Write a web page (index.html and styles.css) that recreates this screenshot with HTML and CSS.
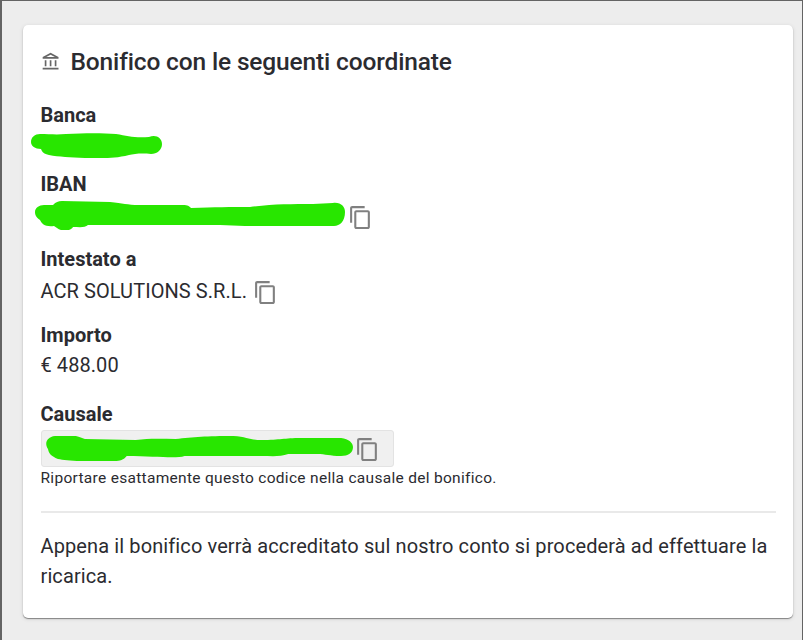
FILE: index.html
```html
<!DOCTYPE html>
<html lang="it">
<head>
  <meta charset="UTF-8">
  <title>Bonifico</title>
  <link rel="stylesheet" href="styles.css">
</head>
<body>
  <svg class="hidden">
    <symbol id="copy" viewBox="0 0 24 24">
      <path d="M16 1H4c-1.1 0-2 .9-2 2v14h2V3h12V1zm3 4H8c-1.1 0-2 .9-2 2v14c0 1.1.9 2 2 2h11c1.1 0 2-.9 2-2V7c0-1.1-.9-2-2-2zm0 16H8V7h11v14z"/>
    </symbol>
  </svg>

  <main class="card">
    <h1>
      <svg class="bank-icon" viewBox="0 0 24 24"><path d="M6.5 10h-2v7h2v-7zm6 0h-2v7h2v-7zm8.5 9H2v2h19v-2zm-2.5-9h-2v7h2v-7zm-7-6.74L16.71 6H6.29l5.21-2.74m0-2.26L2 6v2h19V6l-9.5-5z"/></svg>
      Bonifico con le seguenti coordinate
    </h1>

    <section class="field">
      <h2>Banca</h2>
      <div class="value">
        <svg class="mask mask-bank" viewBox="0 0 131 26"><path d="M9 1C18 1 25 2 35 1C54 0 72 0 85 1C97 3 103 5 118 4C125 1 131 5 131 11C131 17 126 21 120 21C110 20 103 21 98 22C82 26 72 25 54 25C39 24 28 24 18 22C13 21 11 19 10 16C4 16 0 13 0 9C0 4 4 1 9 1Z"/></svg>
      </div>
    </section>

    <section class="field">
      <h2>IBAN</h2>
      <div class="value iban">
        <svg class="mask mask-iban" viewBox="0 0 310 30"><path d="M9 5L18 5C21 2 23 1 27 1L75 2C88 3 92 5 104 5L148 5C153 5 154 6 156 8C180 7 195 7 215 7C238 4 256 4 278 4L298 3C306 2 310 7 310 12C310 21 305 26 299 26L210 26L185 25L53 25C50 28 44 27 38 27C36 31 27 32 22 28L19 26C10 27 7 24 5 20C1 17 0 15 0 12C0 8 4 5 9 5Z"/></svg>
        <svg class="copy-icon"><use href="#copy"/></svg>
      </div>
    </section>

    <section class="field">
      <h2>Intestato a</h2>
      <div class="value holder">
        <span>ACR SOLUTIONS S.R.L.</span>
        <svg class="copy-icon"><use href="#copy"/></svg>
      </div>
    </section>

    <section class="field amount">
      <h2>Importo</h2>
      <div class="value">€ 488.00</div>
    </section>

    <section class="field reason">
      <h2>Causale</h2>
      <div class="code-box">
        <svg class="mask mask-code" viewBox="0 0 308 25"><path d="M9 0L30 0C34 1 36 2 39 3L90 4C105 2 118 3 130 3C148 1 161 0 188 0C202 1 205 4 216 4C236 4 238 2 256 2L296 2C304 3 308 7 308 11C308 17 303 20 296 20C284 20 281 18 272 18L243 18C235 21 226 20 217 20L139 20C130 23 110 20 81 20C78 24 74 25 69 25L35 25C24 25 17 24 12 23C5 20 3 18 2 13C-2 7 1 1 9 0Z"/></svg>
        <svg class="copy-icon"><use href="#copy"/></svg>
      </div>
      <p class="hint">Riportare esattamente questo codice nella causale del bonifico.</p>
    </section>

    <p class="note">Appena il bonifico verrà accreditato sul nostro conto si procederà ad effettuare la ricarica.</p>
  </main>
</body>
</html>
```
FILE: styles.css
```css
* {
  box-sizing: border-box;
}
body {
  margin: 0;
  height: 640px;
  padding: 24px 9px 0 21px;
  border: solid #646464;
  border-width: 1px 1px 0 2px;
  background: #ededed;
  color: #2b2b30;
  font-family: Roboto, sans-serif;
  font-size: 20px;
  line-height: 30px;
  overflow: hidden;
}
.hidden {
  display: none;
}
.card {
  height: 593px;
  padding: 18px 17.5px;
  background: #fff;
  border-radius: 5px;
  box-shadow: 0 1px 1px rgba(0,0,0,0.4), 0 1px 4px rgba(0,0,0,0.12);
}
h1, h2, p {
  margin: 0;
}
h1 {
  display: flex;
  align-items: center;
  height: 38px;
  margin-bottom: 19px;
  font-size: 24.5px;
  font-weight: 500;
  letter-spacing: -0.15px;
}
h2 {
  font-size: 20px;
  font-weight: 700;
}
svg {
  display: block;
  flex: none;
}
.bank-icon {
  width: 20px;
  height: 20px;
  margin-right: 10px;
  fill: #666;
}
.field {
  margin-bottom: 9px;
}
.value {
  display: flex;
  height: 30px;
  letter-spacing: 0.07px;
}
.iban {
  height: 36px;
}
.holder {
  height: 37px;
  line-height: 35px;
}
.copy-icon {
  width: 25px;
  height: 25px;
  fill: #808080;
}
.iban .copy-icon {
  margin: 6px 0 0 2.5px;
}
.holder .copy-icon {
  margin: 6px 0 0 6px;
}
.mask {
  fill: #28e600;
}
.mask-bank {
  width: 131px;
  height: 26px;
  margin: 3px 0 0 -9.5px;
}
.mask-iban {
  width: 310px;
  height: 30px;
  margin: 1px 0 0 -5.5px;
}
.amount {
  margin-bottom: 19px;
}
.code-box {
  display: flex;
  width: 353.5px;
  height: 37px;
  margin-top: 1px;
  padding: 5px 0 0 4.5px;
  background: #f0f0f0;
  border: 1px solid #e3e3e3;
  border-radius: 3px;
}
.mask-code {
  width: 307px;
  height: 25px;
}
.code-box .copy-icon {
  margin: 1px 0 0 2px;
}
.reason {
  margin-bottom: 0;
  padding-bottom: 21px;
  border-bottom: 2px solid #e9e9e9;
}
.hint {
  font-size: 15.5px;
  line-height: 23px;
  letter-spacing: 0.3px;
}
.note {
  margin-top: 18px;
  letter-spacing: 0.11px;
}
```
